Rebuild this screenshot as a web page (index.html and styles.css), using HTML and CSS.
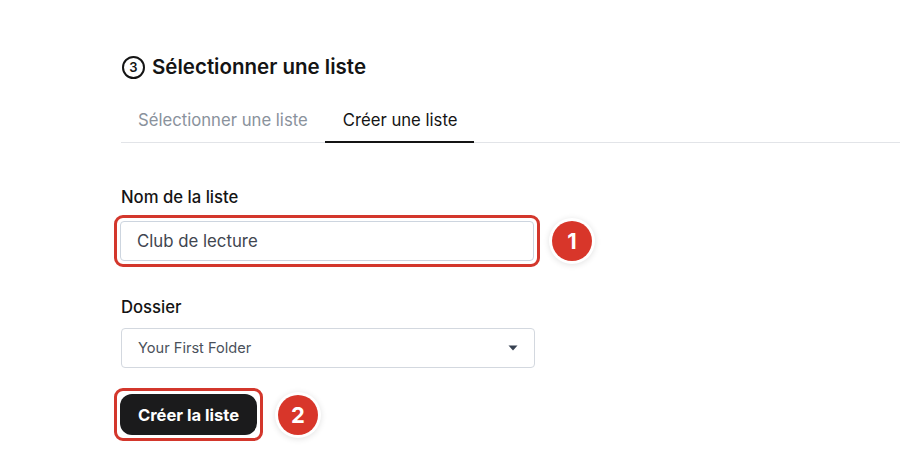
FILE: index.html
```html
<!DOCTYPE html>
<html lang="fr">
<head>
<meta charset="utf-8">
<title>Sélectionner une liste</title>
<link rel="stylesheet" href="styles.css">
</head>
<body>
<main class="page">
  <h2 class="title"><span class="step">3</span>Sélectionner une liste</h2>
  <nav class="tabs">
    <a class="tab">Sélectionner une liste</a>
    <a class="tab active">Créer une liste</a>
  </nav>
  <section class="form">
    <label class="label">Nom de la liste</label>
    <div class="row">
      <div class="hl hl-input"><div class="input">Club de lecture</div></div>
      <span class="badge">1</span>
    </div>
    <label class="label label-2">Dossier</label>
    <div class="select">
      <span>Your First Folder</span>
      <svg class="caret" width="10" height="6" viewBox="0 0 10 6"><path d="M0.5 0.5h9L5 5.5z" fill="#374151"/></svg>
    </div>
    <div class="row row-btn">
      <div class="hl hl-btn"><button class="btn">Créer la liste</button></div>
      <span class="badge badge-2">2</span>
    </div>
  </section>
</main>
</body>
</html>
```
FILE: styles.css
```css
* { box-sizing: border-box; }
html, body { margin: 0; background: #fff; }
body {
  font-family: Inter, "Noto Sans", "Liberation Sans", sans-serif;
  color: #111;
  width: 900px;
  height: 471px;
  overflow: hidden;
}
.page {
  padding: 53px 0 0 121px;
}
.title {
  margin: 0;
  font-size: 20.5px;
  line-height: 28px;
  font-weight: 600;
  display: flex;
  align-items: center;
  color: #141414;
}
.step {
  width: 23px;
  height: 23px;
  border: 2px solid #141414;
  border-radius: 50%;
  font-size: 13px;
  font-weight: 600;
  line-height: 19px;
  text-align: center;
  margin: 0 7px 0 1px;
}
.tabs {
  display: flex;
  margin-top: 19px;
  border-bottom: 1px solid #e2e4e8;
}
.tab {
  padding: 10px 17px 11px 17px;
  font-size: 16.7px;
  line-height: 20px;
  color: #8a929c;
  border-bottom: 2px solid transparent;
  margin-bottom: -1px;
}
.tab.active {
  color: #141414;
  border-bottom-color: #141414;
  padding-left: 18px;
}
.form {
  padding-top: 44px;
}
.label {
  display: block;
  font-size: 16.7px;
  line-height: 20px;
  font-weight: 500;
  color: #141414;
}
.label-2 { margin-top: 30px; }
.row {
  display: flex;
  align-items: center;
  margin-top: 8px;
  margin-left: -7px;
}
.hl {
  border: 3px solid #d3372c;
  border-radius: 9px;
  padding: 3px;
}
.input {
  width: 414px;
  height: 40px;
  border: 1px solid #cdd5df;
  border-radius: 4px;
  padding: 0 16px;
  font-size: 16.8px;
  line-height: 38px;
  color: #3f4650;
}
.badge {
  width: 40px;
  height: 40px;
  border-radius: 50%;
  background: #d8362a;
  color: #fff;
  font-weight: 700;
  font-size: 22px;
  line-height: 40px;
  text-align: center;
  margin-left: 12px;
  box-shadow: 0 0 0 3px #fff, 0 1px 6px 3px rgba(0,0,0,0.12);
}
.select {
  margin-top: 11px;
  width: 414px;
  height: 40px;
  border: 1px solid #d3d8df;
  border-radius: 4px;
  padding: 0 16px 0 16px;
  display: flex;
  align-items: center;
  justify-content: space-between;
  font-size: 14.6px;
  color: #4a515b;
}
.row-btn { margin-top: 20px; }
.btn {
  display: block;
  height: 41px;
  width: 137px;
  border: 0;
  border-radius: 12px;
  background: #1b1b1c;
  color: #fff;
  font-family: inherit;
  font-size: 16.6px;
  font-weight: 700;
  padding: 0;
}
.badge-2 { margin-left: 15px; }
```
